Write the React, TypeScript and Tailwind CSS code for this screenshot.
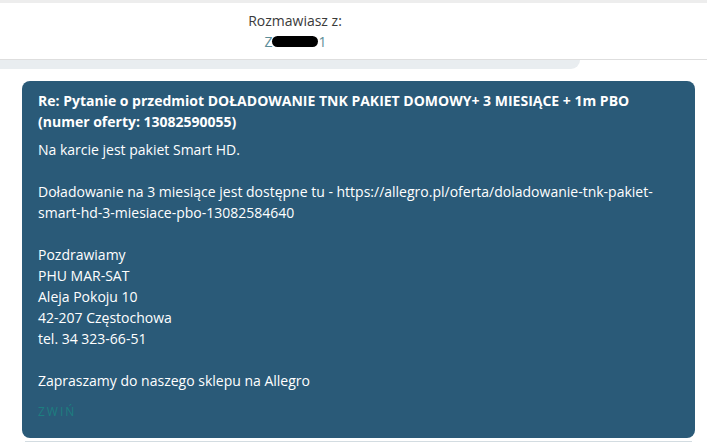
import React from "react";

export default function App() {
  return (
    <div className="w-[707px] h-[443px] bg-white overflow-hidden font-['Open_Sans',sans-serif]">
      <div className="h-[3px] bg-[#ededed]" />
      <div className="h-[57px] border-b border-[#dedede] flex">
        <div className="w-[590px] flex flex-col items-center justify-center text-[14px] leading-[21px]">
          <div className="text-[#3a3a3a]">Rozmawiasz z:</div>
          <div className="flex items-center text-[#5b8d98] pl-[1px]">
            <span>Z</span>
            <span className="inline-block w-[46px] h-[11px] bg-black rounded-full -ml-[1px] mr-[1px]" />
            <span>1</span>
          </div>
        </div>
      </div>
      <div className="w-[580px] h-[9px] bg-[#e9edf0] rounded-br-[10px]" />
      <div className="ml-[22px] mt-[12px] w-[673px]">
        <div className="bg-[#2a5a78] rounded-lg pl-[16px] pr-[16px] pt-[9px] pb-[17px] text-[14px] leading-[21px] text-white">
          <div className="font-bold">
            Re: Pytanie o przedmiot DOŁADOWANIE TNK PAKIET DOMOWY+ 3 MIESIĄCE + 1m PBO
            <br />
            (numer oferty: 13082590055)
          </div>
          <div className="mt-[7px]">
            <div>Na karcie jest pakiet Smart HD.</div>
            <div className="h-[21px]" />
            <div>
              Doładowanie na 3 miesiące jest dostępne tu - https://allegro.pl/oferta/doladowanie-tnk-pakiet-
              <br />
              smart-hd-3-miesiace-pbo-13082584640
            </div>
            <div className="h-[21px]" />
            <div>Pozdrawiamy</div>
            <div>PHU MAR-SAT</div>
            <div>Aleja Pokoju 10</div>
            <div>42-207 Częstochowa</div>
            <div>tel. 34 323-66-51</div>
            <div className="h-[21px]" />
            <div>Zapraszamy do naszego sklepu na Allegro</div>
          </div>
          <div className="mt-[12px] text-[12px] leading-[18px] tracking-[2px] text-[#1d7e80] uppercase">
            ZWIŃ
          </div>
        </div>
        <div className="mt-[3px] h-[1px] bg-[#d3dce1] mx-[3px]" />
      </div>
    </div>
  );
}
